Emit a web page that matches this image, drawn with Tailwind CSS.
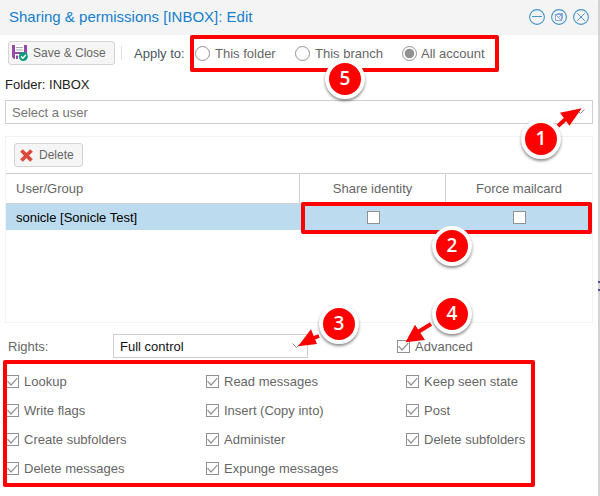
<!DOCTYPE html>
<html lang="en">
<head>
<meta charset="utf-8">
<title>Sharing &amp; permissions</title>
<script src="https://cdn.jsdelivr.net/npm/@tailwindcss/browser@4"></script>
</head>
<body class="w-[600px] h-[496px] overflow-hidden bg-white">
<svg class="hidden">
  <symbol id="ck" viewBox="0 0 13 13"><rect x=".5" y=".5" width="12" height="12" fill="#fff" stroke="#919191"/><path d="M1.5 6.2 5 10 11.3 3.2" fill="none" stroke="#919191" stroke-width="1.2"/></symbol>
  <symbol id="un" viewBox="0 0 13 13"><rect x=".5" y=".5" width="12" height="12" fill="#fff" stroke="#919191"/></symbol>
</svg>
<div class="relative w-[600px] h-[496px] flex font-['Liberation_Sans',Arial,sans-serif] text-[13px] leading-[15px] text-[#666] whitespace-nowrap">
  <main class="w-[598px] flex flex-col">
    <header class="h-[35px] shrink-0 bg-[#f4f4f4] flex items-center pl-[9px] pr-[9px] justify-between rounded-tr-[3px]">
      <h1 class="text-[15px] leading-[18px] text-[#157fcc] pb-[2px]">Sharing &amp; permissions [INBOX]: Edit</h1>
      <div class="flex gap-[6px] pb-[1px]">
        <svg class="w-4 h-4" viewBox="0 0 16 16" fill="none" stroke="#4595c8"><circle cx="8" cy="8" r="7.4" stroke-width="1.1"/><path d="M3 7.5h10"/></svg>
        <svg class="w-4 h-4" viewBox="0 0 16 16" fill="none" stroke="#4595c8"><circle cx="8" cy="8" r="7.4" stroke-width="1.1"/><path d="M6.5 5.5v-1h5v5h-1M4.5 5.5h6v6h-6zM4.5 5.5l6 6M7.5 8.5l4-4" stroke="#6f97d6" stroke-width=".8"/></svg>
        <svg class="w-4 h-4" viewBox="0 0 16 16" fill="none" stroke="#4595c8"><circle cx="8" cy="8" r="7.4" stroke-width="1.1"/><path d="m4.2 4.2 7.6 7.6m0-7.6-7.6 7.6" stroke="#5a8ed0"/></svg>
      </div>
    </header>
    <div class="h-[36px] shrink-0 flex items-center pl-2">
      <div class="w-[107px] h-6 border border-[#d4d4d4] rounded-[3px] bg-[#f5f5f5] flex items-center pl-[3px] gap-[5px] text-[12px]">
        <svg class="w-4 h-4" viewBox="0 0 16 16"><path d="M0 0h15v14H2l-2-2z" fill="#9847ac"/><path d="M3 0h9v7H3zM3 9h7v5H3z" fill="#fff"/><path d="M4 2.5h7M4 5h7" stroke="#aaa"/><path d="M4 10.5h2v3.5H4z" fill="#9847ac"/><circle cx="11.3" cy="11.5" r="4.5" fill="#0b9c7c"/><path d="m9 11.4 1.8 1.8 3-3.3" fill="none" stroke="#fff" stroke-width="1.5"/></svg>
        <span>Save &amp; Close</span>
      </div>
      <i class="w-px h-[14px] bg-[#e1e1e1] ml-[6px]"></i>
      <span class="w-[61px] ml-[12px] text-[#4a5560]">Apply to:</span>
      <span class="w-[100px] flex items-center gap-[5px]"><svg class="w-[15px] h-[15px]" viewBox="0 0 15 15"><circle cx="7.5" cy="7.5" r="7" fill="#fff" stroke="#929292"/></svg>This folder</span>
      <span class="w-[107px] flex items-center gap-[5px]"><svg class="w-[15px] h-[15px]" viewBox="0 0 15 15"><circle cx="7.5" cy="7.5" r="7" fill="#fff" stroke="#929292"/></svg>This branch</span>
      <span class="flex items-center gap-[4px]"><svg class="w-[15px] h-[15px]" viewBox="0 0 15 15"><circle cx="7.5" cy="7.5" r="7" fill="#fff" stroke="#929292"/><circle cx="7.5" cy="7.5" r="4.8" fill="#919191"/></svg>All account</span>
    </div>
    <div class="h-[29px] shrink-0 pl-[5px] pt-[6px] text-[#222]">Folder: INBOX</div>
    <div class="w-[588px] h-6 shrink-0 ml-[5px] border border-[#cfcfcf] flex items-center pl-[6px] pr-[7px] justify-between text-[#757575]"><span>Select a user</span><svg class="w-[9px] h-[6px]" viewBox="0 0 9 6"><path d="m.5.5 4 4 4-4" fill="none" stroke="#888"/></svg></div>
    <section class="w-[588px] h-[187px] shrink-0 ml-[5px] mt-[12px] border border-[#f3f3f3] flex flex-col">
      <div class="h-[36px] shrink-0 pt-[6px] pl-2">
        <div class="w-[69px] h-6 border border-[#d4d4d4] rounded-[3px] bg-[#f5f5f5] flex items-center pl-[5px] gap-[6px] text-[12px]"><svg class="w-[13px] h-[13px]" viewBox="0 0 13 13"><path d="m1.5 1.5 10 10m0-10-10 10" stroke="#dc4a3d" stroke-width="3.8"/></svg><span>Delete</span></div>
      </div>
      <div class="h-[31px] shrink-0 grid grid-cols-[294px_146px_146px] border-y border-[#cfcfcf] leading-[29px]">
        <div class="pl-[10px] border-r border-[#cfcfcf]">User/Group</div>
        <div class="text-center border-r border-[#cfcfcf]">Share identity</div>
        <div class="text-center">Force mailcard</div>
      </div>
      <div class="h-[26px] shrink-0 grid grid-cols-[294px_146px_146px] items-center bg-[#bddbee]">
        <div class="pl-[10px] text-black">sonicle [Sonicle Test]</div>
        <svg class="w-[13px] h-[13px] mx-auto"><use href="#un"/></svg>
        <svg class="w-[13px] h-[13px] mx-auto"><use href="#un"/></svg>
      </div>
    </section>
    <div class="h-[46px] shrink-0 flex items-center pl-2">
      <span class="w-[105px]">Rights:</span>
      <div class="w-[195px] h-6 border border-[#cfcfcf] flex items-center justify-between pl-[6px] pr-[6px] text-[#111]"><span>Full control</span><svg class="w-[9px] h-[6px]" viewBox="0 0 9 6"><path d="m.5.5 4 4 4-4" fill="none" stroke="#888"/></svg></div>
      <span class="ml-[89px] flex items-center gap-[5px]"><svg class="w-[13px] h-[13px]"><use href="#ck"/></svg>Advanced</span>
    </div>
    <div class="grid grid-cols-[200px_200px_auto] auto-rows-[29px] pl-[6px] -mt-[2px] [&>span]:flex [&>span]:items-center [&>span]:gap-[5px]">
      <span><svg class="w-[13px] h-[13px]"><use href="#ck"/></svg>Lookup</span>
      <span><svg class="w-[13px] h-[13px]"><use href="#ck"/></svg>Read messages</span>
      <span><svg class="w-[13px] h-[13px]"><use href="#ck"/></svg>Keep seen state</span>
      <span><svg class="w-[13px] h-[13px]"><use href="#ck"/></svg>Write flags</span>
      <span><svg class="w-[13px] h-[13px]"><use href="#ck"/></svg>Insert (Copy into)</span>
      <span><svg class="w-[13px] h-[13px]"><use href="#ck"/></svg>Post</span>
      <span><svg class="w-[13px] h-[13px]"><use href="#ck"/></svg>Create subfolders</span>
      <span><svg class="w-[13px] h-[13px]"><use href="#ck"/></svg>Administer</span>
      <span><svg class="w-[13px] h-[13px]"><use href="#ck"/></svg>Delete subfolders</span>
      <span><svg class="w-[13px] h-[13px]"><use href="#ck"/></svg>Delete messages</span>
      <span><svg class="w-[13px] h-[13px]"><use href="#ck"/></svg>Expunge messages</span>
    </div>
  </main>
  <aside class="w-[2px] bg-[#d3d3d5] pt-[281px]"><i class="block h-[10px] border-y-2 border-[#55509a]"></i></aside>

  <!-- Annotations over the dialog -->
  <div class="absolute left-[190px] top-[35px] w-[309px] h-[37px] border-4 border-[#f00] rounded-[2px]"></div>
  <div class="absolute left-[301px] top-[202px] w-[291px] h-[32px] border-4 border-[#f00] rounded-[2px]"></div>
  <div class="absolute left-[3px] top-[360px] w-[532px] h-[127px] border-4 border-[#f00] rounded-[2px]"></div>
  <svg class="absolute left-0 top-0 w-[600px] h-[496px]" viewBox="0 0 600 496" fill="#f00" stroke="#f00">
    <path d="m558 126 12-11M319 336l-8 3M431 324l-13 8" stroke-width="4"/>
    <path d="M581.7 108.3 560 112.7l9.5 13zM298 346.3l13-17 6 14.7zM405.5 342.3l9.5-17.5 10 15.2z" stroke="none"/>
  </svg>
  <div class="[&>b]:absolute [&>b]:size-10 [&>b]:rounded-full [&>b]:border-4 [&>b]:border-white [&>b]:bg-[#f00] [&>b]:shadow-[0_2px_3px_rgba(0,0,0,0.45)] [&>b]:text-white [&>b]:text-[19px] [&>b]:leading-[31px] [&>b]:font-semibold [&>b]:text-center font-['Open_Sans',sans-serif]">
    <b class="left-[521px] top-[119px]">1</b>
    <b class="left-[432px] top-[226px]">2</b>
    <b class="left-[319px] top-[304px]">3</b>
    <b class="left-[432px] top-[294px]">4</b>
    <b class="left-[325px] top-[59px]">5</b>
  </div>
</div>
</body>
</html>
